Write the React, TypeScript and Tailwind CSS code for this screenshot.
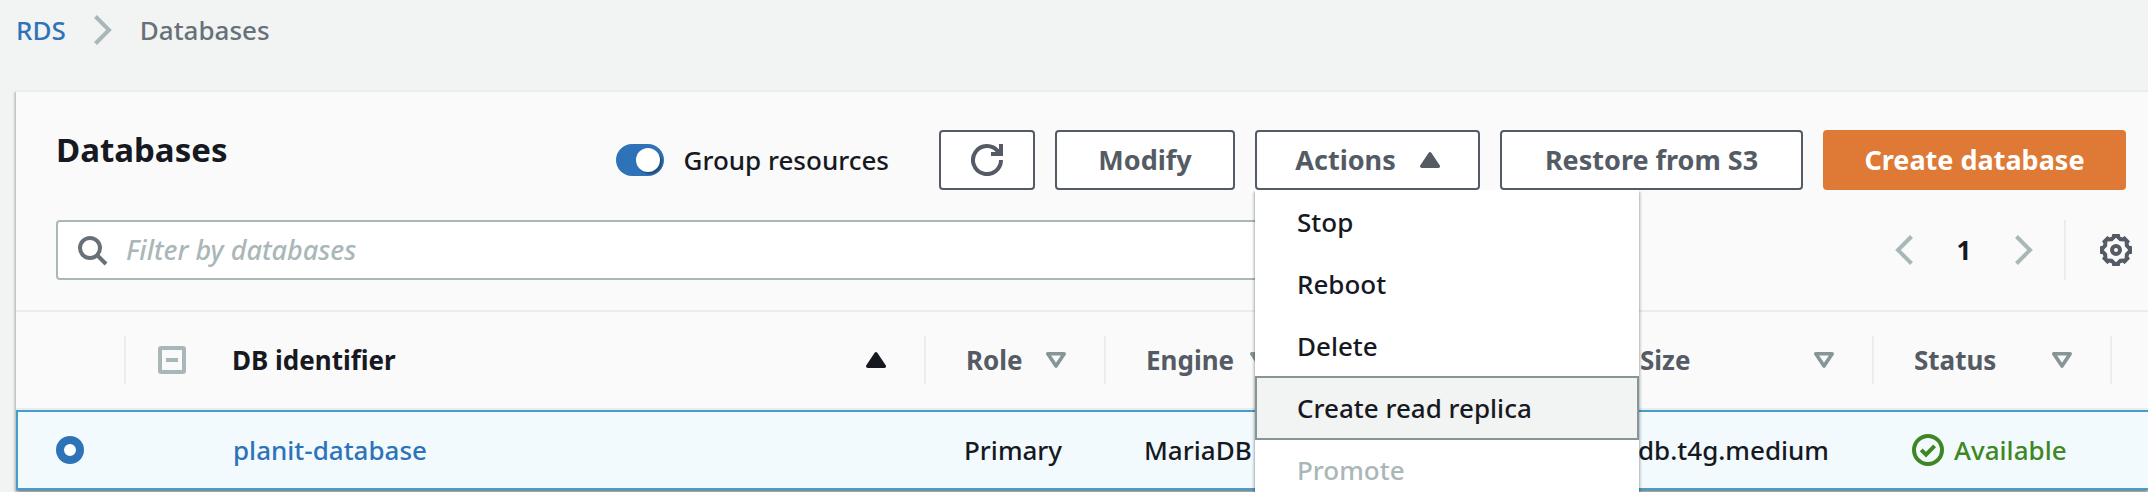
import { useState, type ReactNode } from "react";

function SortIcon({ dir, filled }: { dir: "up" | "down"; filled?: boolean }) {
  return (
    <svg
      viewBox="0 0 20 16"
      className={dir === "up" ? "h-4 w-5 shrink-0" : "h-4 w-5 shrink-0 rotate-180"}
      fill={filled ? "currentColor" : "none"}
      stroke="currentColor"
      strokeWidth="3.6"
      strokeLinejoin="round"
      aria-hidden="true"
    >
      <path d="M10 2 18.2 14.2H1.8Z" />
    </svg>
  );
}

function Chevron({ flip }: { flip?: boolean }) {
  return (
    <svg
      viewBox="0 0 20 32"
      className={flip ? "h-8 w-5 rotate-180" : "h-8 w-5"}
      fill="none"
      stroke="#aab7b8"
      strokeWidth="4"
      aria-hidden="true"
    >
      <path d="M2.5 2.5 16 16 2.5 29.5" />
    </svg>
  );
}

function RefreshIcon() {
  return (
    <svg viewBox="0 0 16 16" className="size-8" fill="none" stroke="currentColor" strokeWidth="2" aria-hidden="true">
      <path d="M15 8a7 7 0 1 1-1.5-4.3" />
      <path d="M10 5h5V0" />
      <path d="M12.6 3.2 15 5V3Z" fill="currentColor" strokeWidth="1" />
    </svg>
  );
}

function SearchIcon() {
  return (
    <svg viewBox="0 0 16 16" className="size-8 shrink-0" fill="none" stroke="#687078" strokeWidth="2" aria-hidden="true">
      <circle cx="7" cy="7" r="5" />
      <path d="M10.5 10.5 15 15" />
    </svg>
  );
}

function polar(radius: number, degrees: number) {
  const a = (degrees * Math.PI) / 180;
  return `${(8 + radius * Math.cos(a)).toFixed(2)} ${(8 + radius * Math.sin(a)).toFixed(2)}`;
}

const teeth = [0, 45, 90, 135, 180, 225, 270, 315];
const gearOuter = teeth
  .map((t) => [polar(7, t - 18), polar(8.2, t - 13), polar(8.2, t + 13), polar(7, t + 18)].join("L"))
  .join("L");
const gearInner = teeth.map((t) => [polar(6.1, t), polar(4.8, t + 22.5)].join("L")).join("L");

function GearIcon() {
  return (
    <svg viewBox="0 0 16 16" className="size-8" aria-hidden="true">
      <path d={`M${gearOuter}ZM${gearInner}Z`} fill="#545b64" fillRule="evenodd" />
      <circle cx="8" cy="8" r="2" fill="none" stroke="#545b64" strokeWidth="2" />
    </svg>
  );
}

function StatusOkIcon() {
  return (
    <svg viewBox="0 0 16 16" className="size-8" fill="none" stroke="currentColor" strokeWidth="2" aria-hidden="true">
      <circle cx="8" cy="8" r="7" />
      <path d="m4.6 7.9 2.4 2.4 4.3-4.4" />
    </svg>
  );
}

function CollapseIcon() {
  return (
    <svg viewBox="0 0 28 28" className="size-7 shrink-0" fill="none" stroke="#aab7b8" strokeWidth="4" aria-hidden="true">
      <rect x="2" y="2" width="24" height="24" rx="1" />
      <path d="M8 14h12" />
    </svg>
  );
}

const button =
  "flex h-[60px] items-center justify-center rounded-[4px] border-2 border-[#555b66] bg-white px-[38px] text-[27px] font-bold whitespace-nowrap text-[#545b64]";

function HeaderCell({ children, sort }: { children?: ReactNode; sort?: ReactNode }) {
  return (
    <th scope="col" className="h-[98px] border-b-2 border-[#eaeded] p-0 text-left font-bold text-[#545b64]">
      <div className="flex h-12 items-center justify-between border-r-2 border-[#eaeded] pr-[38px] pl-10">
        <span>{children}</span>
        <span className="text-[#879596]">{sort}</span>
      </div>
    </th>
  );
}

const cell = "h-20 border-y-2 border-[#459ec9] bg-[#f2fafe] p-0 pl-[38px] whitespace-nowrap";

const actions = ["Stop", "Reboot", "Delete", "Create read replica", "Promote"];

export default function App() {
  const [grouped, setGrouped] = useState(true);
  const [open, setOpen] = useState(true);

  return (
    <div className="min-h-screen overflow-hidden bg-[#f2f4f4] pl-4 font-['Noto_Sans','Open_Sans',sans-serif] text-[26px] font-medium text-[#16191f]">
      <nav aria-label="Breadcrumb" className="flex h-[90px] items-start">
        <ol className="flex h-[60px] items-center">
          <li>
            <a href="#rds" className="text-[#2e73b8]">RDS</a>
          </li>
          <li className="mx-[27px]">
            <Chevron />
          </li>
          <li className="text-[#687078]">Databases</li>
        </ol>
      </nav>

      <main className="border-t-2 border-[#eaeded] bg-[#fafafa] shadow-[0_2px_2px_0_rgba(0,28,36,0.3),2px_2px_2px_0_rgba(0,28,36,0.15),-2px_2px_2px_0_rgba(0,28,36,0.15)]">
        <header className="flex items-start justify-between pt-[38px] pr-[22px] pl-10">
          <h1 className="text-[33px] leading-10 font-bold">Databases</h1>
          <div className="flex items-center gap-5">
            <label className="mr-[30px] flex items-center gap-5 whitespace-nowrap">
              <input
                type="checkbox"
                checked={grouped}
                onChange={(e) => setGrouped(e.target.checked)}
                className="peer sr-only"
              />
              <span className="flex h-8 w-12 items-center rounded-full bg-[#879596] p-1 peer-checked:justify-end peer-checked:bg-[#2e73b8]">
                <span className="size-6 rounded-full bg-white shadow-[2px_2px_2px_0_rgba(0,0,0,0.35)]" />
              </span>
              Group resources
            </label>
            <button
              type="button"
              aria-label="Refresh"
              className="flex h-[60px] w-24 items-center justify-center rounded-[4px] border-2 border-[#555b66] bg-white text-[#545b64]"
            >
              <RefreshIcon />
            </button>
            <button type="button" className={`${button} min-w-[180px]`}>Modify</button>
            <div className="relative">
              <button
                type="button"
                aria-expanded={open}
                onClick={() => setOpen(!open)}
                className={`${button} min-w-[225px] gap-6`}
              >
                Actions
                <SortIcon dir="up" filled />
              </button>
              {open && (
                <ul
                  role="menu"
                  className="absolute top-full left-0 z-10 w-96 bg-white shadow-[0_2px_2px_0_rgba(0,28,36,0.3),2px_2px_2px_0_rgba(0,28,36,0.15),-2px_2px_2px_0_rgba(0,28,36,0.15)]"
                >
                  {actions.map((label) => (
                    <li key={label} role="none" className="-mb-0.5">
                      <button
                        type="button"
                        role="menuitem"
                        disabled={label === "Promote"}
                        className={
                          label === "Create read replica"
                            ? "relative h-16 w-full border-2 border-[#879596] bg-[#f2f3f3] px-10 text-left"
                            : "h-16 w-full border-2 border-transparent px-10 text-left disabled:text-[#aab7b8]"
                        }
                      >
                        {label}
                      </button>
                    </li>
                  ))}
                </ul>
              )}
            </div>
            <button type="button" className={`${button} min-w-[303px]`}>Restore from S3</button>
            <button
              type="button"
              className="flex h-[60px] min-w-[303px] items-center justify-center rounded-[4px] bg-[#de7a35] px-10 text-[27px] font-bold whitespace-nowrap text-white"
            >
              Create database
            </button>
          </div>
        </header>

        <div className="flex items-center justify-between pt-[30px] pr-4 pb-[30px] pl-10">
          <label className="flex h-[60px] max-w-[1400px] flex-1 items-center gap-[18px] rounded-[4px] border-2 border-[#aab7b8] bg-white px-[18px]">
            <SearchIcon />
            <input
              type="text"
              aria-label="Filter by databases"
              placeholder="Filter by databases"
              className="min-w-0 flex-1 bg-transparent text-[27px] outline-none placeholder:text-[#aab7b8] placeholder:italic"
            />
          </label>
          <div className="flex h-[60px] items-center">
            <button type="button" aria-label="Previous page" className="flex w-[60px] justify-center">
              <Chevron flip />
            </button>
            <button type="button" className="w-[60px] text-center font-bold">1</button>
            <button type="button" aria-label="Next page" className="flex w-[60px] justify-center">
              <Chevron />
            </button>
            <button
              type="button"
              aria-label="Preferences"
              className="ml-[10px] flex h-full items-center border-l-2 border-[#eaeded] pl-[34px]"
            >
              <GearIcon />
            </button>
          </div>
        </div>

        <table className="w-full table-fixed border-separate border-spacing-0 border-t-2 border-[#eaeded]">
          <colgroup>
            <col className="w-[110px]" />
            <col className="w-[800px]" />
            <col className="w-[180px]" />
            <col className="w-[204px]" />
            <col className="w-[290px]" />
            <col className="w-[274px]" />
            <col className="w-[238px]" />
            <col />
          </colgroup>
          <thead>
            <tr>
              <HeaderCell />
              <th scope="col" aria-sort="ascending" className="border-b-2 border-[#eaeded] p-0 text-left font-bold">
                <div className="flex h-12 items-center border-r-2 border-[#eaeded] pr-[38px] pl-8">
                  <CollapseIcon />
                  <span className="ml-[46px] flex-1">DB identifier</span>
                  <SortIcon dir="up" filled />
                </div>
              </th>
              <HeaderCell sort={<SortIcon dir="down" />}>Role</HeaderCell>
              <HeaderCell sort={<SortIcon dir="down" />}>Engine</HeaderCell>
              <HeaderCell />
              <HeaderCell sort={<SortIcon dir="down" />}>Size</HeaderCell>
              <HeaderCell sort={<SortIcon dir="down" />}>Status</HeaderCell>
              <th className="border-b-2 border-[#eaeded] p-0" />
            </tr>
          </thead>
          <tbody>
            <tr>
              <td className={`${cell} border-l-2`}>
                <input
                  type="radio"
                  name="database"
                  aria-label="planit-database"
                  defaultChecked
                  className="block size-7 appearance-none rounded-full border-8 border-[#2e73b8] bg-white"
                />
              </td>
              <td className={cell}>
                <a href="#planit-database" className="ml-[69px] text-[#2e73b8]">planit-database</a>
              </td>
              <td className={cell}>Primary</td>
              <td className={cell}>MariaDB</td>
              <td className={cell} />
              <td className={cell}>db.t4g.medium</td>
              <td className={cell}>
                <span className="flex items-center gap-[10px] text-[#3f8624]">
                  <StatusOkIcon />
                  Available
                </span>
              </td>
              <td className={cell} />
            </tr>
          </tbody>
        </table>
      </main>
    </div>
  );
}
